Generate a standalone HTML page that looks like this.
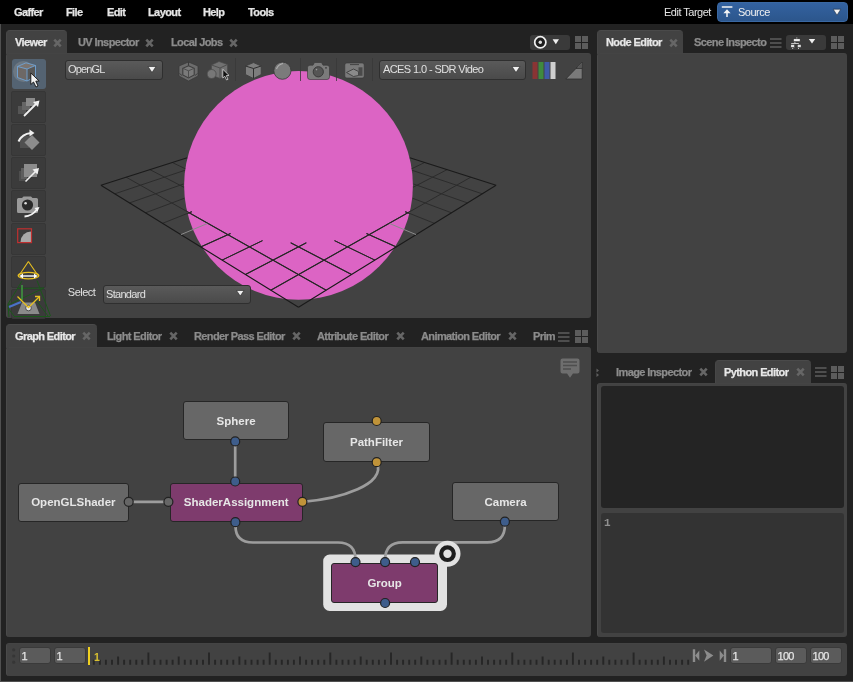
<!DOCTYPE html>
<html><head><meta charset="utf-8">
<style>
*{margin:0;padding:0;box-sizing:border-box}
html,body{width:853px;height:682px;overflow:hidden;background:#222;font-family:"Liberation Sans",sans-serif;}
.a{position:absolute}
.menu{left:0;top:0;width:853px;height:24px;background:#000}
.mi{position:absolute;top:5px;font-weight:bold;font-size:11px;letter-spacing:-0.6px;color:#e6e6e6;line-height:14px;-webkit-text-stroke:0.25px currentColor}
span,.node,.field,.dd{will-change:transform}
.panel{position:absolute;background:#424242;border-radius:3px;border-left:1px solid #4a4a4a;border-top:1px solid #444}
.tab{position:absolute;background:#424242;border-radius:4px 4px 0 0;border-top:1px solid #4a4a4a;border-left:1px solid #474747}
.tt{position:absolute;font-weight:bold;font-size:11px;letter-spacing:-0.6px;line-height:14px;white-space:nowrap;-webkit-text-stroke:0.25px currentColor}
.on{color:#e8e8e8}
.off{color:#8c8c8c}
.x{position:absolute;width:9px;height:9px}
.grid4{position:absolute;width:14px;height:14px}
.grid4 i{position:absolute;width:6.5px;height:6.5px;background:#5e5e5e}
.ham{position:absolute;width:11px;height:10px}
.ham i{position:absolute;left:0;width:11px;height:2px;background:#707070}
.tb{position:absolute;left:11px;width:35px;height:32px;border:1px solid #363636;border-radius:2px;background:#3b3b3b}
.dd{position:absolute;border-radius:3px;background:linear-gradient(#5a5a5a,#4a4a4a);border:1px solid #2f2f2f;color:#e0e0e0;font-size:11px;letter-spacing:-0.5px;line-height:14px;white-space:nowrap}
.node{position:absolute;border:1.8px solid #262626;border-radius:3px;background:#676767;color:#e6e6e6;font-weight:bold;font-size:11.5px;text-align:center;white-space:nowrap}
.plug{position:absolute;width:10px;height:10px;border-radius:50%;border:1.3px solid #232323}
.pb{background:#3f5f8c}
.po{background:#c1933c}
.pg{background:#6a6a6a}
.field{position:absolute;background:#5b5b5b;border:1px solid #3a3a3a;border-radius:3px;color:#e4e4e4;font-size:11px;letter-spacing:-0.8px;line-height:16.5px;padding-left:1.6px;-webkit-text-stroke:0.25px currentColor}
</style></head>
<body>
<!-- left window line -->
<div class="a" style="left:0;top:24px;width:1.3px;height:658px;background:#505050"></div>
<div class="a" style="left:0;top:681px;width:853px;height:1px;background:#505050"></div>
<!-- menu bar -->
<div class="a menu">
  <span class="mi" style="left:14px">Gaffer</span>
  <span class="mi" style="left:66px">File</span>
  <span class="mi" style="left:107px">Edit</span>
  <span class="mi" style="left:148px">Layout</span>
  <span class="mi" style="left:203px">Help</span>
  <span class="mi" style="left:248px">Tools</span>
  <span class="a" style="left:664px;top:5px;font-size:11px;letter-spacing:-0.5px;color:#e6e6e6;line-height:14px">Edit Target</span>
  <div class="a" style="left:717px;top:2px;width:131px;height:20px;background:linear-gradient(#3362a0,#2c568c);border-radius:4px;border:1px solid #3a68a2"></div>
  <span class="a" style="left:738px;top:5px;font-size:11px;letter-spacing:-0.5px;color:#f0f0f0;line-height:14px">Source</span>
</div>

<!-- ============ VIEWER ============ -->
<div class="tab" style="left:6px;top:30px;width:61px;height:24px"></div>
<span class="tt on" style="left:15px;top:35px">Viewer</span>
<span class="tt off" style="left:78px;top:35px">UV Inspector</span>
<span class="tt off" style="left:171px;top:35px">Local Jobs</span>
<div class="panel" style="left:6px;top:53px;width:585px;height:265px"></div>
<!--VIEWERSTART-->
<!-- VIEWER CONTENT -->
<svg class="a" style="left:0;top:0" width="853" height="330" viewBox="0 0 853 330">
  <defs><clipPath id="vc"><rect x="6" y="53" width="585" height="265" rx="3"/></clipPath></defs>
  <g clip-path="url(#vc)">
  <circle cx="298.5" cy="185.4" r="114.4" fill="#dc64c4"/>
  <clipPath id="sc"><circle cx="298.5" cy="185.4" r="114.4"/></clipPath>
  <path d="M184.9 170.3L114.8 193.8M412.1 170.3L482.2 193.8M183.5 184.0L129.6 202.9M413.5 184.0L467.4 202.9M184.3 198.3L145.5 212.8M412.7 198.3L451.5 212.8M191.8 211.7L162.6 223.3M405.2 211.7L434.4 223.3M230.5 233.5L200.7 246.9M366.5 233.5L396.3 246.9M424.7 162.5L411.8 168.7M262.5 240.6L222.1 260.1M172.3 162.5L185.2 168.7M334.5 240.6L374.9 260.1M447.1 169.6L413.0 187.3M306.3 242.8L245.4 274.5M149.9 169.6L184.0 187.3M290.7 242.8L351.6 274.5M470.8 177.2L270.8 290.2M126.2 177.2L326.2 290.2" stroke="#2c2c2c" stroke-width="1" fill="none"/>
  <path d="M184.9 170.3L114.8 193.8M412.1 170.3L482.2 193.8M183.5 184.0L129.6 202.9M413.5 184.0L467.4 202.9M184.3 198.3L145.5 212.8M412.7 198.3L451.5 212.8M191.8 211.7L162.6 223.3M405.2 211.7L434.4 223.3M230.5 233.5L200.7 246.9M366.5 233.5L396.3 246.9M424.7 162.5L411.8 168.7M262.5 240.6L222.1 260.1M172.3 162.5L185.2 168.7M334.5 240.6L374.9 260.1M447.1 169.6L413.0 187.3M306.3 242.8L245.4 274.5M149.9 169.6L184.0 187.3M290.7 242.8L351.6 274.5M470.8 177.2L270.8 290.2M126.2 177.2L326.2 290.2" stroke="#262626" stroke-width="1.05" fill="none" clip-path="url(#sc)"/>
  <path d="M187.2 157.7L100.9 185.2M409.8 157.7L496.1 185.2M496.1 185.2L298.5 307.3M100.9 185.2L298.5 307.3" stroke="#1a1a1a" stroke-width="1.1" fill="none"/>
  <path d="M207.2 223.6L180.9 234.6M389.8 223.6L416.1 234.6" stroke="#8a8a8a" stroke-width="1" fill="none"/>
  </g>
</svg>

<!-- viewer left toolbar -->
<div class="a" style="left:12px;top:59px;width:34px;height:30px;background:#546372;border-radius:3px"></div>
<div class="tb" style="top:91px"></div>
<div class="tb" style="top:124px"></div>
<div class="tb" style="top:157px"></div>
<div class="tb" style="top:190px"></div>
<div class="tb" style="top:223px"></div>
<div class="tb" style="top:256px"></div>
<div class="tb" style="top:289px;height:30px"></div>
<svg class="a" style="left:0;top:0" width="60" height="330" viewBox="0 0 60 330">
  <!-- btn1: circle + cube + cursor -->
  <circle cx="23.5" cy="71.5" r="10.5" fill="#6c7782"/>
  <path d="M17.5 66.5L26 62.8L35.5 65.5L35.5 76.5L27 81L17.5 77.5Z" fill="#6d6866"/>
  <path d="M17.5 66.5L26 62.8L35.5 65.5L27 69Z" fill="#7b7470"/>
  <path d="M27 69L35.5 65.5L35.5 76.5L27 81Z" fill="#575757"/>
  <path d="M17.5 66.5L26 62.8L35.5 65.5L35.5 76.5L27 81L17.5 77.5ZM17.5 66.5L27 69L35.5 65.5M27 69L27 81" fill="none" stroke="#6fa4d6" stroke-width="0.9"/>
  <path d="M30.8 73L30.8 84.5L33.5 82L36 87L38 86L35.8 81.2L39.2 81Z" fill="#f2f2f2" stroke="#111" stroke-width="0.9"/>
  <!-- btn2: stacked squares + arrow -->
  <rect x="18" y="106" width="8" height="8" fill="#555"/>
  <rect x="22" y="102" width="8" height="8" fill="#666"/>
  <rect x="26" y="98" width="9" height="8" fill="#8a8a8a"/>
  <path d="M24 116L37 103" stroke="#f0f0f0" stroke-width="1.8"/>
  <path d="M39.5 100.5L33 102L38 107Z" fill="#f0f0f0"/>
  <!-- btn3: rotate -->
  <rect x="20" y="136" width="9" height="12" fill="#505050"/>
  <path d="M32 135L39.5 142.5L32 150L24.5 142.5Z" fill="#8c8c8c"/>
  <path d="M18.5 141.5Q22 134 31 133" stroke="#f0f0f0" stroke-width="2" fill="none"/>
  <path d="M29.5 129.5L34.5 133L29.5 136.5Z" fill="#f0f0f0"/>
  <!-- btn4: scale -->
  <rect x="19" y="171" width="6" height="10" fill="#4e4e4e"/>
  <rect x="21" y="168" width="6" height="11" fill="#5e5e5e"/>
  <rect x="24" y="164" width="13" height="13" fill="#8c8c8c"/>
  <path d="M25.5 181.5L37 170" stroke="#f0f0f0" stroke-width="1.6"/>
  <path d="M39 168L32.5 169.5L37.5 174.5Z" fill="#f0f0f0"/>
  <!-- btn5: camera -->
  <path d="M17 199.5Q17 198 18.5 198L22 198L23.5 196.5L31 196.5L32.5 198L36.5 198Q38 198 38 199.5L38 211.5Q38 213 36.5 213L18.5 213Q17 213 17 211.5Z" fill="#9a9a9a"/>
  <circle cx="27.5" cy="205" r="5.6" fill="#2a2a2a"/>
  <circle cx="25.6" cy="203.3" r="1.3" fill="#ddd"/>
  <path d="M24.5 216.5Q32 216 37 209.5" stroke="#f5f5f5" stroke-width="1.9" fill="none"/>
  <path d="M39.5 207L34.5 208L37.5 211.5Z" fill="#f5f5f5"/>
  <!-- btn6: red square -->
  <path d="M31 231.5A10.5 10.5 0 0 0 20.5 242L31 242Z" fill="#a9a9a9"/>
  <rect x="17.7" y="228.8" width="13.8" height="13.8" fill="none" stroke="#c03030" stroke-width="1.2"/>
  <!-- btn7: cone -->
  <path d="M28.4 261.5L19 275.5M28.4 261.5L38 275.5" stroke="#e8c020" stroke-width="1.1" fill="none"/>
  <ellipse cx="28.5" cy="275.6" rx="10.3" ry="3.3" fill="none" stroke="#e8c020" stroke-width="1.3"/>
  <path d="M21 276L36 276" stroke="#fff" stroke-width="1.4"/>
  <path d="M19.5 276L23 273.5L23 278.5Z M37.5 276L34 273.5L34 278.5Z" fill="#fff"/>
  <!-- btn8: gizmo -->
  <path d="M22 281L8 304L9 317M37 280.5L50.5 316M8 305L44 288M17 288.5L44 288M14 316.5L50 316.5M36 300L48 316M8 308L14 316" stroke="#1b571b" stroke-width="1" fill="none"/>
  <path d="M22 285L22 300" stroke="#3f8f3f" stroke-width="1.7"/>
  <path d="M21 302L9 307" stroke="#4a72c8" stroke-width="2"/>
  <path d="M22 302.5L35 302.5L39.5 314L17.5 314Z" fill="#8a8a8a"/>
  <circle cx="28.5" cy="308" r="2.8" fill="#e8e8e8" stroke="#333" stroke-width="0.8"/>
  <path d="M17.5 296.5L28.5 307.5L39 297" stroke="#e8c020" stroke-width="1.3" fill="none"/>
  <path d="M35 296.5L39.5 296.5L39.5 301" stroke="#e8c020" stroke-width="1.3" fill="none"/>
</svg>

<!-- viewer top toolbar -->
<div class="dd" style="left:64.8px;top:59.8px;width:97.5px;height:19.5px"><span class="a" style="left:1.8px;top:1.3px;letter-spacing:-0.85px">OpenGL</span></div>
<div class="dd" style="left:379px;top:60px;width:147px;height:19.5px"><span class="a" style="left:2.5px;top:1.3px;letter-spacing:-0.6px">ACES 1.0 - SDR Video</span></div>
<svg class="a" style="left:0;top:50px" width="600" height="40" viewBox="0 50 600 40">
  <path d="M148 66.5L156 66.5L152 72.5Z" fill="#f0f0f0" stroke="#222" stroke-width="0.6"/>
  <path d="M512 66.5L520 66.5L516 72.5Z" fill="#f0f0f0" stroke="#222" stroke-width="0.6"/>
  <!-- separators -->
  <path d="M235.5 58V81M300.5 58V81M336.5 58V81M372.5 58V81" stroke="#383838" stroke-width="0.8"/>
  <!-- icon1 -->
  <path d="M188.5 62L198 66L198 76L188.5 81L179 76L179 66Z" fill="#6c6c6c" stroke="#383838" stroke-width="0.7"/>
  <path d="M188.5 62V67.5" stroke="#3a3a3a" stroke-width="1.1"/>
  <path d="M188.5 65.8L194.2 68.3L194.2 75L188.5 78L182.8 75L182.8 68.3Z" fill="#7a7a7a" stroke="#3e3e3e" stroke-width="1.1"/>
  <path d="M182.8 68.3L188.5 70.8L194.2 68.3M188.5 70.8V78" stroke="#4a4a4a" stroke-width="0.9" fill="none"/>
  <path d="M182 75.5L179.5 73.5M195 75.5L197.5 73.5" stroke="#3a3a3a" stroke-width="0.9"/>
  <!-- icon2 -->
  <path d="M211.5 65L219 61.5L227.5 64.5L227.5 75L220 78.5L211.5 75Z" fill="#717171" stroke="#4a4a4a" stroke-width="0.7"/>
  <path d="M211.5 65L220 68L227.5 64.5M220 68V78.5" stroke="#4a4a4a" stroke-width="0.9" fill="none"/>
  <circle cx="211.6" cy="74" r="4.5" fill="#777" stroke="#4a4a4a" stroke-width="0.8"/>
  <path d="M222.8 69.3L222.8 78L224.8 76.3L226.6 80L228 79.3L226.3 75.6L229 75.4Z" fill="#111" stroke="#eee" stroke-width="0.7"/>
  <!-- icon3 cube -->
  <path d="M245.5 66L253.5 62.6L261.2 66L261.2 74.5L253.5 78.5L245.5 74.5Z" fill="#7d7d7d" stroke="#3c3c3c" stroke-width="0.8"/>
  <path d="M245.5 66L253.5 68.5L261.2 66M253.5 68.5V78.5" stroke="#2e2e2e" stroke-width="1" fill="none"/>
  <!-- icon4 sphere -->
  <circle cx="282.4" cy="70.7" r="8.6" fill="#7b7b7b" stroke="#383838" stroke-width="0.8"/>
  <path d="M276.5 69Q278 64.5 283 63.5" stroke="#b0b0b0" stroke-width="1.1" fill="none"/>
  <!-- camera -->
  <path d="M310 65.2H313L314.5 62.5H321.5L323 65.2H327Q329.5 65.2 329.5 67.7V77Q329.5 79.5 327 79.5H310Q307.5 79.5 307.5 77V67.7Q307.5 65.2 310 65.2Z" fill="#7b7b7b" stroke="#353535" stroke-width="0.6"/>
  <circle cx="318.3" cy="71.8" r="5.1" fill="#555" stroke="#3a3a3a" stroke-width="1"/>
  <circle cx="316.5" cy="69.6" r="0.8" fill="#9a9a9a"/>
  <circle cx="326" cy="67.8" r="0.9" fill="#3c3c3c"/>
  <!-- board -->
  <rect x="344.8" y="63" width="19.4" height="15" rx="2" fill="#7a7a7a" stroke="#383838" stroke-width="0.6"/>
  <path d="M350 64.6H359" stroke="#444" stroke-width="1"/>
  <path d="M346.5 72.5L353.5 69L358.5 71.5V75.5L353.5 76.5Z" fill="#8a8a8a" stroke="#3e3e3e" stroke-width="0.9"/>
  <rect x="358.5" y="67.3" width="4" height="8.5" fill="#4a4a4a"/>
  <!-- rgb -->
  <rect x="532.5" y="62" width="5" height="17" fill="#8a3434"/>
  <rect x="538.5" y="62" width="5" height="17" fill="#3f8a3f"/>
  <rect x="544.5" y="62" width="5" height="17" fill="#3f5aa8"/>
  <rect x="550.5" y="62" width="5" height="17" fill="#cfcfcf"/>
  <!-- triangle -->
  <path d="M565.8 79L582.2 62L582.2 79Z" fill="#7a7a7a" stroke="#2e2e2e" stroke-width="0.8"/><path d="M576 68.2H582.2" stroke="#2e2e2e" stroke-width="1.2"/><path d="M582 62.8L582 67.4L577.3 67.4Z" fill="#555"/>
</svg>
<div class="a" style="left:67.8px;top:285px;font-size:11px;letter-spacing:-0.5px;color:#e0e0e0;line-height:14px">Select</div>
<div class="dd" style="left:103px;top:284.5px;width:147.5px;height:18.5px"><span class="a" style="left:1.5px;top:1.3px;letter-spacing:-0.7px">Standard</span></div>
<svg class="a" style="left:230px;top:284px" width="20" height="20"><path d="M6.5 6.5L14 6.5L10.25 12Z" fill="#f0f0f0" stroke="#222" stroke-width="0.6"/></svg>
<!-- focus + grid in tab row -->
<div class="a" style="left:530px;top:35px;width:40px;height:15px;background:#3a3a3a;border-radius:3px"></div>
<svg class="a" style="left:530px;top:35px" width="40" height="15"><circle cx="10.3" cy="7.3" r="5.6" fill="#1e1e1e" stroke="#f0f0f0" stroke-width="1.7"/><circle cx="10.3" cy="7.3" r="1.7" fill="#e0e0e0"/><path d="M22.6 4.3L29 4.3L25.8 9.2Z" fill="#f0f0f0"/></svg>
<!--VIEWEREND-->

<!-- ============ NODE EDITOR ============ -->
<div class="tab" style="left:597px;top:30px;width:86px;height:24px"></div>
<span class="tt on" style="left:606px;top:35px">Node Editor</span>
<span class="tt off" style="left:694px;top:35px">Scene Inspecto</span>
<div class="panel" style="left:597px;top:53px;width:250px;height:300px"></div>

<!-- ============ GRAPH EDITOR ============ -->
<div class="tab" style="left:6px;top:324px;width:91px;height:24px"></div>
<span class="tt on" style="left:15px;top:329px">Graph Editor</span>
<span class="tt off" style="left:107px;top:329px">Light Editor</span>
<span class="tt off" style="left:194px;top:329px">Render Pass Editor</span>
<span class="tt off" style="left:317px;top:329px">Attribute Editor</span>
<span class="tt off" style="left:421px;top:329px">Animation Editor</span>
<span class="tt off" style="left:533px;top:329px">Prim</span>
<div class="panel" style="left:6px;top:347px;width:585px;height:290px"></div>
<!--GRAPHSTART-->
<!-- GRAPH CONTENT -->
<svg class="a" style="left:0;top:340px" width="600" height="300" viewBox="0 340 600 300">
  <!-- comment icon -->
  <path d="M562.5 358.5H577.5Q579.5 358.5 579.5 360.5V371.5Q579.5 373.5 577.5 373.5H573L570 377.8L567 373.5H562.5Q560.5 373.5 560.5 371.5V360.5Q560.5 358.5 562.5 358.5Z" fill="#6e6e6e"/>
  <path d="M563 362H577M563 365.5H577M563 369H571" stroke="#4e4e4e" stroke-width="1.5"/>
  <!-- group highlight -->
  <rect x="323.2" y="554.6" width="123.8" height="56.3" rx="6.5" fill="#e2e2e2"/>
  <!-- connections -->
  <g stroke="#9d9d9d" stroke-width="2.7" fill="none" stroke-linecap="round">
    <path d="M235.2 441.4V481.5"/>
    <path d="M128.7 501.8H168.4"/>
    <path d="M376.7 462.2C387.2 484.4 339.9 499 302.5 501.8"/>
    <path d="M235.5 522.4V526Q235.5 542.5 253 542.5H338Q355.5 542.5 355.5 560"/>
    <path d="M504.9 521.7V525Q504.9 542.4 487.4 542.4H402.6Q385.1 542.4 385.1 560"/>
  </g>
  <circle cx="447.5" cy="553.7" r="13" fill="#e2e2e2"/>
  <circle cx="447.5" cy="553.7" r="6.3" fill="none" stroke="#1e1e1e" stroke-width="4.2"/>
</svg>
<div class="node" style="left:182.7px;top:401.3px;width:106.1px;height:39.3px;line-height:39.9px">Sphere</div>
<div class="node" style="left:17.6px;top:482.6px;width:110.7px;height:38.7px;line-height:36.5px">OpenGLShader</div>
<div class="node" style="left:169.5px;top:482.6px;width:132.5px;height:38.7px;line-height:36.5px;background:#7e3b6d">ShaderAssignment</div>
<div class="node" style="left:323px;top:422px;width:107px;height:39.9px;line-height:38.5px">PathFilter</div>
<div class="node" style="left:451.5px;top:482.3px;width:107.1px;height:39.1px;line-height:39.7px">Camera</div>
<div class="node" style="left:331.4px;top:562.5px;width:107.3px;height:39.9px;line-height:38.5px;background:#7e3b6d">Group</div>
<svg class="a" style="left:0;top:340px" width="600" height="300" viewBox="0 340 600 300">
  <g stroke="#222" stroke-width="1.2">
    <circle cx="235.2" cy="441.4" r="4.5" fill="#3e5d8b"/>
    <circle cx="235.2" cy="481.5" r="4.5" fill="#3e5d8b"/>
    <circle cx="235.4" cy="522.2" r="4.5" fill="#3e5d8b"/>
    <circle cx="128.7" cy="501.8" r="4.5" fill="#666"/>
    <circle cx="168.4" cy="501.8" r="4.5" fill="#666"/>
    <circle cx="302.4" cy="501.8" r="4.5" fill="#c09339"/>
    <circle cx="376.7" cy="421" r="4.5" fill="#c09339"/>
    <circle cx="376.7" cy="462.2" r="4.5" fill="#c09339"/>
    <circle cx="504.9" cy="521.7" r="4.5" fill="#3e5d8b"/>
    <circle cx="355.5" cy="562.1" r="4.5" fill="#3e5d8b"/>
    <circle cx="385.1" cy="562.1" r="4.5" fill="#3e5d8b"/>
    <circle cx="415" cy="562.1" r="4.5" fill="#3e5d8b"/>
    <circle cx="385.1" cy="603" r="4.5" fill="#3e5d8b"/>
  </g>
</svg>
<!--GRAPHEND-->

<!-- ============ PYTHON EDITOR ============ -->
<div class="tab" style="left:715px;top:360px;width:96px;height:24px"></div>
<span class="tt off" style="left:616px;top:365.3px">Image Inspector</span>
<span class="tt on" style="left:724px;top:365.3px">Python Editor</span>
<div class="panel" style="left:597px;top:383px;width:250px;height:254px"></div>
<div class="a" style="left:601px;top:386px;width:243px;height:122px;background:#242424;border-radius:3px"></div>
<div class="a" style="left:601px;top:513px;width:243px;height:120px;background:#333;border-radius:3px"></div>
<span class="a" style="left:603.8px;top:517.5px;font-family:'Liberation Mono';font-size:11px;line-height:11px;font-weight:bold;color:#909090">1</span>

<!-- ============ TIMELINE ============ -->
<div class="panel" style="left:6px;top:643px;width:841px;height:33px"></div>
<div class="field" style="left:18.5px;top:647px;width:32px;height:17px">1</div>
<div class="field" style="left:53.5px;top:647px;width:32px;height:17px">1</div>
<div class="a" style="left:88px;top:647px;width:2px;height:18px;background:#f0d020"></div>
<div class="field" style="left:730px;top:647px;width:41.5px;height:17px">1</div>
<div class="field" style="left:774.5px;top:647px;width:31.5px;height:17px">100</div>
<div class="field" style="left:809.5px;top:647px;width:32px;height:17px">100</div>
<!-- icons -->
<svg class="a" style="left:52.5px;top:37.5px" width="9" height="10" viewBox="0 0 9 10"><path d="M1.3 1.6L7.7 8.4M7.7 1.6L1.3 8.4" stroke="#666" stroke-width="2.6"/></svg>
<svg class="a" style="left:145.0px;top:37.5px" width="9" height="10" viewBox="0 0 9 10"><path d="M1.3 1.6L7.7 8.4M7.7 1.6L1.3 8.4" stroke="#666" stroke-width="2.6"/></svg>
<svg class="a" style="left:229.0px;top:37.5px" width="9" height="10" viewBox="0 0 9 10"><path d="M1.3 1.6L7.7 8.4M7.7 1.6L1.3 8.4" stroke="#666" stroke-width="2.6"/></svg>
<svg class="a" style="left:668.5px;top:37.5px" width="9" height="10" viewBox="0 0 9 10"><path d="M1.3 1.6L7.7 8.4M7.7 1.6L1.3 8.4" stroke="#666" stroke-width="2.6"/></svg>
<svg class="a" style="left:81.5px;top:331.0px" width="9" height="10" viewBox="0 0 9 10"><path d="M1.3 1.6L7.7 8.4M7.7 1.6L1.3 8.4" stroke="#666" stroke-width="2.6"/></svg>
<svg class="a" style="left:168.5px;top:331.0px" width="9" height="10" viewBox="0 0 9 10"><path d="M1.3 1.6L7.7 8.4M7.7 1.6L1.3 8.4" stroke="#666" stroke-width="2.6"/></svg>
<svg class="a" style="left:291.5px;top:331.0px" width="9" height="10" viewBox="0 0 9 10"><path d="M1.3 1.6L7.7 8.4M7.7 1.6L1.3 8.4" stroke="#666" stroke-width="2.6"/></svg>
<svg class="a" style="left:395.5px;top:331.0px" width="9" height="10" viewBox="0 0 9 10"><path d="M1.3 1.6L7.7 8.4M7.7 1.6L1.3 8.4" stroke="#666" stroke-width="2.6"/></svg>
<svg class="a" style="left:507.5px;top:331.0px" width="9" height="10" viewBox="0 0 9 10"><path d="M1.3 1.6L7.7 8.4M7.7 1.6L1.3 8.4" stroke="#666" stroke-width="2.6"/></svg>
<svg class="a" style="left:698.5px;top:367.3px" width="9" height="10" viewBox="0 0 9 10"><path d="M1.3 1.6L7.7 8.4M7.7 1.6L1.3 8.4" stroke="#666" stroke-width="2.6"/></svg>
<svg class="a" style="left:795.5px;top:367.3px" width="9" height="10" viewBox="0 0 9 10"><path d="M1.3 1.6L7.7 8.4M7.7 1.6L1.3 8.4" stroke="#666" stroke-width="2.6"/></svg>
<svg class="a" style="left:575px;top:36px" width="14" height="14"><path d="M0 0h6v6h-6zM7 0h6v6h-6zM0 7h6v6h-6zM7 7h6v6h-6z" fill="#5c5c5c"/></svg>
<svg class="a" style="left:575px;top:330px" width="14" height="14"><path d="M0 0h6v6h-6zM7 0h6v6h-6zM0 7h6v6h-6zM7 7h6v6h-6z" fill="#5c5c5c"/></svg>
<svg class="a" style="left:831px;top:36px" width="14" height="14"><path d="M0 0h6v6h-6zM7 0h6v6h-6zM0 7h6v6h-6zM7 7h6v6h-6z" fill="#5c5c5c"/></svg>
<svg class="a" style="left:831px;top:366px" width="14" height="14"><path d="M0 0h6v6h-6zM7 0h6v6h-6zM0 7h6v6h-6zM7 7h6v6h-6z" fill="#5c5c5c"/></svg>
<svg class="a" style="left:770px;top:37.5px" width="12" height="11"><path d="M0 1h11.5M0 5h11.5M0 9h11.5" stroke="#5e5e5e" stroke-width="1.5"/></svg>
<svg class="a" style="left:558px;top:332px" width="12" height="11"><path d="M0 1h11.5M0 5h11.5M0 9h11.5" stroke="#5e5e5e" stroke-width="1.5"/></svg>
<svg class="a" style="left:814.5px;top:367.3px" width="12" height="11"><path d="M0 1h11.5M0 5h11.5M0 9h11.5" stroke="#5e5e5e" stroke-width="1.5"/></svg>
<!-- misc details -->
<svg class="a" style="left:717px;top:2px" width="131" height="20">
  <path d="M4.8 5H15.4" stroke="#f4f4f4" stroke-width="1.5"/>
  <path d="M10 15V9" stroke="#f4f4f4" stroke-width="1.5"/>
  <path d="M6.4 11.2L10 7.2L13.6 11.2Z" fill="#f4f4f4"/>
  <path d="M116.2 7.2H123.8L120 13.2Z" fill="#f4f4f4" stroke="#1a2a40" stroke-width="0.6"/>
</svg>
<div class="a" style="left:786px;top:35px;width:40px;height:14.6px;background:#3a3a3a;border-radius:3px"></div>
<svg class="a" style="left:786px;top:35px" width="40" height="15">
  <path d="M10.8 2.5V4M8.9 6.6V8.5H5.5V9.2M8.9 8.5H12.5V9.2M6.7 12.5V14M12.5 12.5V14" stroke="#e8e8e8" stroke-width="0.8" fill="none"/>
  <rect x="7.5" y="3.8" width="6.6" height="2.8" fill="#f0f0f0" stroke="#202020" stroke-width="0.5"/>
  <rect x="4.8" y="9.4" width="3.8" height="3.1" fill="#e0e0e0" stroke="#202020" stroke-width="0.5"/>
  <rect x="11.3" y="9.4" width="3.8" height="3.1" fill="#e0e0e0" stroke="#202020" stroke-width="0.5"/>
  <path d="M22.8 4.1H29.2L26 8.4Z" fill="#f0f0f0"/>
</svg>
<svg class="a" style="left:596px;top:366px" width="4" height="12"><path d="M0.5 2.5L3 4.5L0.5 6.5Z M0.5 7L3 9L0.5 11Z" fill="#606060"/></svg>
<!-- TIMELINE CONTENT -->
<svg class="a" style="left:0;top:640px" width="853" height="42" viewBox="0 640 853 42">
  <path d="M93.8 659.8V664.7M99.9 659.8V664.7M105.9 659.8V664.7M112.0 659.8V664.7M118.1 656.5V664.7M124.1 659.8V664.7M130.2 659.8V664.7M136.3 659.8V664.7M142.3 659.8V664.7M148.4 652.5V664.7M154.4 659.8V664.7M160.5 659.8V664.7M166.6 659.8V664.7M172.6 659.8V664.7M178.7 656.5V664.7M184.8 659.8V664.7M190.8 659.8V664.7M196.9 659.8V664.7M203.0 659.8V664.7M209.0 652.5V664.7M215.1 659.8V664.7M221.2 659.8V664.7M227.2 659.8V664.7M233.3 659.8V664.7M239.4 656.5V664.7M245.4 659.8V664.7M251.5 659.8V664.7M257.6 659.8V664.7M263.6 659.8V664.7M269.7 652.5V664.7M275.8 659.8V664.7M281.8 659.8V664.7M287.9 659.8V664.7M293.9 659.8V664.7M300.0 656.5V664.7M306.1 659.8V664.7M312.1 659.8V664.7M318.2 659.8V664.7M324.3 659.8V664.7M330.3 652.5V664.7M336.4 659.8V664.7M342.5 659.8V664.7M348.5 659.8V664.7M354.6 659.8V664.7M360.7 656.5V664.7M366.7 659.8V664.7M372.8 659.8V664.7M378.9 659.8V664.7M384.9 659.8V664.7M391.0 652.5V664.7M397.1 659.8V664.7M403.1 659.8V664.7M409.2 659.8V664.7M415.2 659.8V664.7M421.3 656.5V664.7M427.4 659.8V664.7M433.4 659.8V664.7M439.5 659.8V664.7M445.6 659.8V664.7M451.6 652.5V664.7M457.7 659.8V664.7M463.8 659.8V664.7M469.8 659.8V664.7M475.9 659.8V664.7M482.0 656.5V664.7M488.0 659.8V664.7M494.1 659.8V664.7M500.2 659.8V664.7M506.2 659.8V664.7M512.3 652.5V664.7M518.4 659.8V664.7M524.4 659.8V664.7M530.5 659.8V664.7M536.5 659.8V664.7M542.6 656.5V664.7M548.7 659.8V664.7M554.7 659.8V664.7M560.8 659.8V664.7M566.9 659.8V664.7M572.9 652.5V664.7M579.0 659.8V664.7M585.1 659.8V664.7M591.1 659.8V664.7M597.2 659.8V664.7M603.3 656.5V664.7M609.3 659.8V664.7M615.4 659.8V664.7M621.5 659.8V664.7M627.5 659.8V664.7M633.6 652.5V664.7M639.6 659.8V664.7M645.7 659.8V664.7M651.8 659.8V664.7M657.8 659.8V664.7M663.9 656.5V664.7M670.0 659.8V664.7M676.0 659.8V664.7M682.1 659.8V664.7M688.2 659.8V664.7" stroke="#262626" stroke-width="1.9"/>
  <circle cx="13.7" cy="649.8" r="1.6" fill="#363636"/>
  <circle cx="13.7" cy="656" r="1.6" fill="#363636"/>
  <circle cx="13.7" cy="662.2" r="1.6" fill="#363636"/>
  <path d="M692.8 649.2H695.2V662H692.8Z M699.3 650.5V660.8L695.2 655.6Z" fill="#8c8c8c"/>
  <path d="M704 649.6L713.4 655.6L704 661.7L706.6 655.6Z" fill="#8c8c8c"/>
  <path d="M723.8 649.2H726.2V662H723.8Z M719.7 650.5V660.8L723.8 655.6Z" fill="#8c8c8c"/>
</svg>
<span class="a" style="left:94.3px;top:650.5px;font-size:10.5px;font-weight:bold;color:#d8c030;line-height:12px">1</span>
</body></html>
